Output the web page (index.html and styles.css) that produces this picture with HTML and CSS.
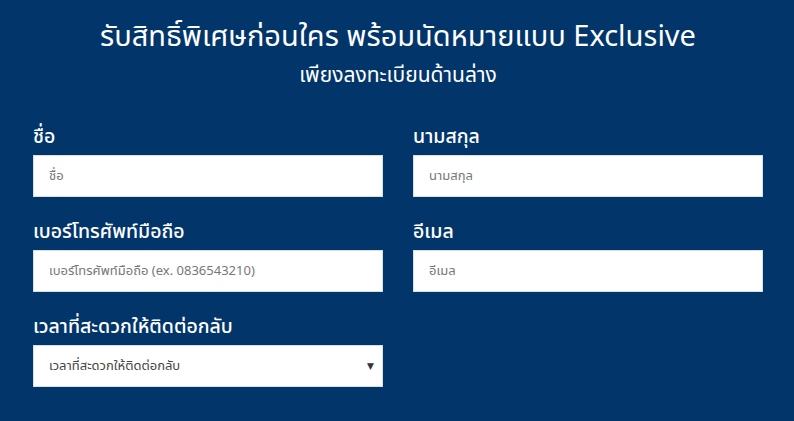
FILE: index.html
```
<!DOCTYPE html>
<html lang="th">
<head>
<meta charset="utf-8">
<link rel="stylesheet" href="styles.css">
</head>
<body>
<section class="register">
  <h1 class="title">รับสิทธิ์พิเศษก่อนใคร พร้อมนัดหมายแบบ Exclusive</h1>
  <p class="subtitle">เพียงลงทะเบียนด้านล่าง</p>
  <form class="form">
    <div class="field">
      <label class="label">ชื่อ</label>
      <div class="input">ชื่อ</div>
    </div>
    <div class="field">
      <label class="label">นามสกุล</label>
      <div class="input">นามสกุล</div>
    </div>
    <div class="field">
      <label class="label">เบอร์โทรศัพท์มือถือ</label>
      <div class="input">เบอร์โทรศัพท์มือถือ (ex. 0836543210)</div>
    </div>
    <div class="field">
      <label class="label">อีเมล</label>
      <div class="input">อีเมล</div>
    </div>
    <div class="field">
      <label class="label">เวลาที่สะดวกให้ติดต่อกลับ</label>
      <div class="input select"><span class="select-text">เวลาที่สะดวกให้ติดต่อกลับ</span><span class="caret">▼</span></div>
    </div>
  </form>
</section>
</body>
</html>
```
FILE: styles.css
```
html, body {
  margin: 0;
  padding: 0;
  background: #02366b;
}
body {
  width: 794px;
  height: 421px;
  overflow: hidden;
  font-family: "Noto Sans Thai", "Noto Sans", "DejaVu Sans", sans-serif;
  color: #fff;
}
.register {
  padding: 17px 31px 0 33px;
}
.title {
  margin: 0;
  text-align: center;
  font-size: 29px;
  font-weight: 400;
  line-height: 40px;
}
.subtitle {
  margin: 4px 0 0;
  text-align: center;
  font-size: 21px;
  line-height: 30px;
}
.form {
  margin-top: 33px;
  display: grid;
  grid-template-columns: 350px 350px;
  column-gap: 30px;
  row-gap: 22px;
}
.field {
  display: flex;
  flex-direction: column;
}
.label {
  font-size: 19.5px;
  line-height: 26px;
  font-weight: 500;
  margin-bottom: 5px;
}
.input {
  height: 42px;
  box-sizing: border-box;
  background: #fff;
  border: 1px solid #d6e0ea;
  padding: 0 15px;
  display: flex;
  align-items: center;
  font-size: 13px;
  color: #777;
}
.select {
  justify-content: space-between;
  color: #444;
  padding-right: 8px;
}
.caret {
  font-size: 9px;
  color: #333;
}
```
